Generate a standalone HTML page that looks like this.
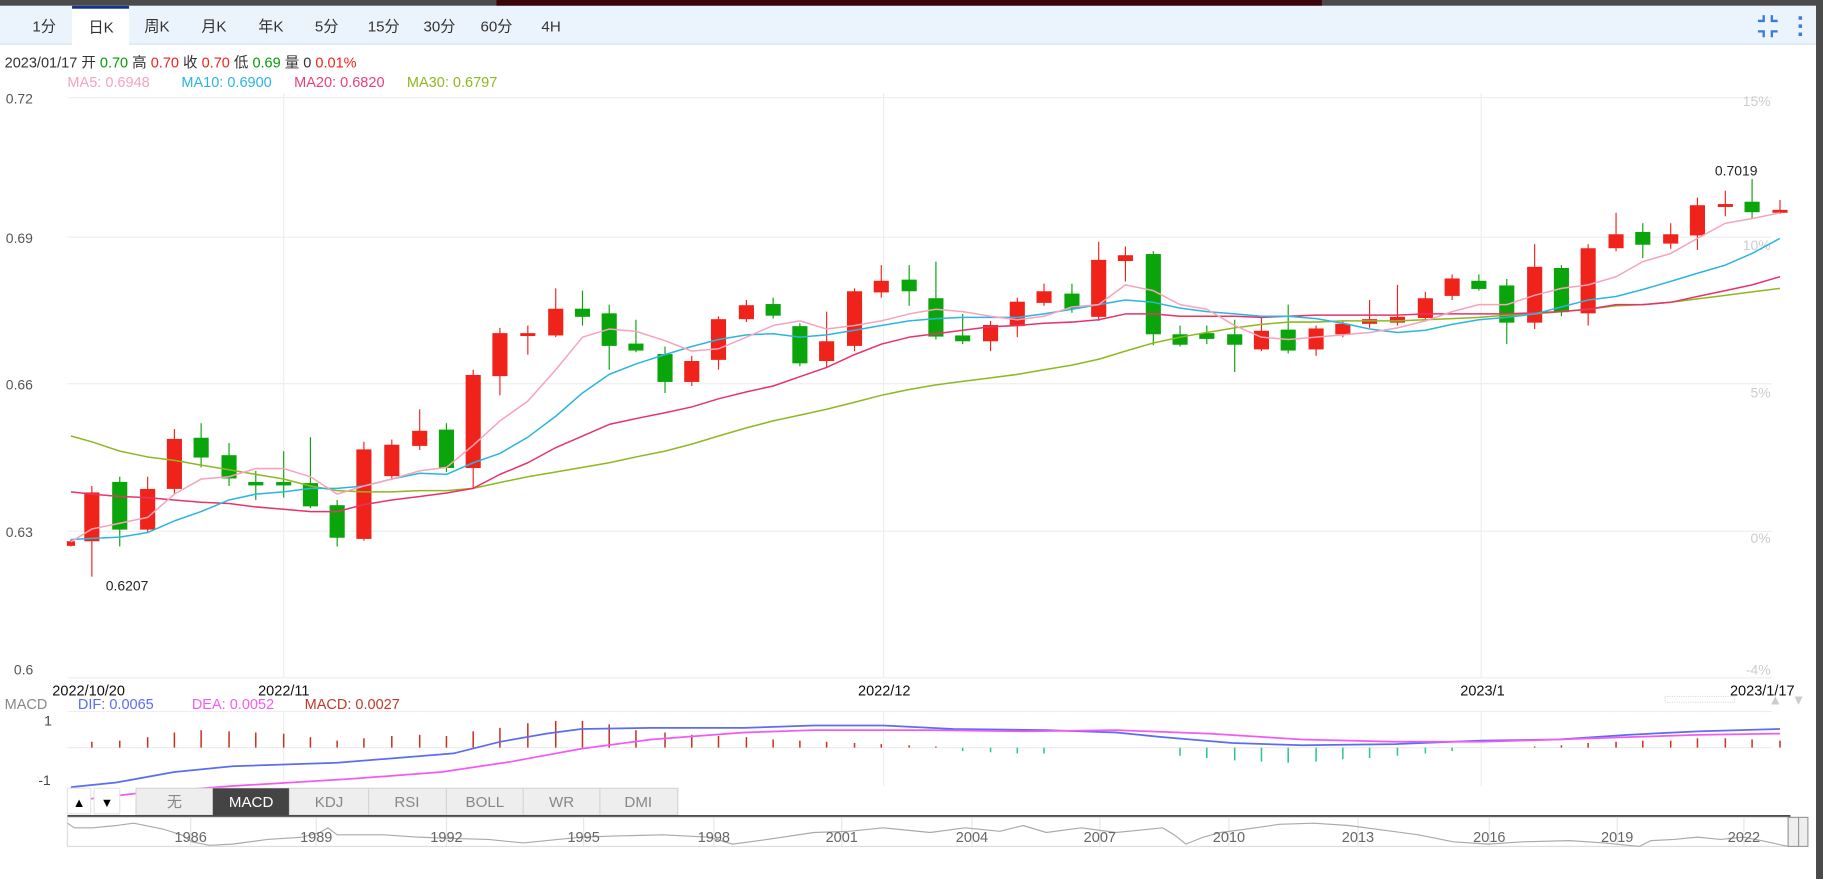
<!DOCTYPE html>
<html><head><meta charset="utf-8"><style>
html,body{margin:0;padding:0;width:1823px;height:879px;overflow:hidden;background:#fff}
svg{display:block}
text{font-family:"Liberation Sans","Noto Sans CJK SC",sans-serif}
</style></head><body>
<svg width="1823" height="879" viewBox="0 0 1568 756" preserveAspectRatio="none" xmlns="http://www.w3.org/2000/svg">
<rect x="0" y="0" width="1568" height="756" fill="#fff"/>
<!-- top bar -->
<rect x="0" y="0" width="1568" height="5" fill="#4a4a4a"/>
<rect x="427" y="0" width="710" height="5" fill="#3a0508"/>
<rect x="0" y="5" width="1562" height="33" fill="#ebf3fd"/>
<rect x="0" y="37.5" width="1562" height="1" fill="#d3e2f5"/>
<rect x="62" y="6" width="49" height="33" fill="#fff"/>
<rect x="62" y="5" width="49" height="2.5" fill="#14338a"/>
<rect x="1562" y="0" width="6" height="756" fill="#4a4a4a"/>
<g font-size="13" fill="#333" text-anchor="middle">
<text x="38" y="27">1分</text><text x="87" y="28">日K</text><text x="135" y="27">周K</text><text x="184" y="27">月K</text><text x="233" y="27">年K</text><text x="281" y="27">5分</text><text x="330" y="27">15分</text><text x="378" y="27">30分</text><text x="427" y="27">60分</text><text x="474" y="27">4H</text>
</g>
<g stroke="#3a7bd5" stroke-width="2" fill="none">
<path d="M1512 18h5v-5M1524 13v5h5M1512 27h5v5M1524 32v-5h5"/>
</g>
<g fill="#3a7bd5"><rect x="1547" y="14" width="3" height="3"/><rect x="1547" y="21" width="3" height="3"/><rect x="1547" y="28" width="3" height="3"/></g>
<!-- info -->
<g font-size="12.5">
<text x="4" y="58" fill="#333">2023/01/17 开 <tspan fill="#0a9a0a">0.70</tspan> 高 <tspan fill="#f0231b">0.70</tspan> 收 <tspan fill="#f0231b">0.70</tspan> 低 <tspan fill="#0a9a0a">0.69</tspan> 量 0 <tspan fill="#f0231b">0.01%</tspan></text>
<text x="58" y="75" fill="#f7a3bd">MA5: 0.6948</text>
<text x="156" y="75" fill="#2bb6e0">MA10: 0.6900</text>
<text x="253" y="75" fill="#e8427a">MA20: 0.6820</text>
<text x="350" y="75" fill="#8fb820">MA30: 0.6797</text>
</g>
<!-- grid -->
<g stroke="#eee" stroke-width="1">
<line x1="58" y1="84" x2="1524" y2="84"/><line x1="58" y1="204" x2="1524" y2="204"/><line x1="58" y1="330" x2="1524" y2="330"/><line x1="58" y1="457" x2="1524" y2="457"/><line x1="58" y1="583" x2="1524" y2="583"/>
<line x1="244" y1="80" x2="244" y2="583"/><line x1="760" y1="80" x2="760" y2="583"/><line x1="1274" y1="80" x2="1274" y2="583"/>
<line x1="58" y1="612" x2="1524" y2="612"/><line x1="58" y1="643" x2="1524" y2="643"/>
<line x1="244" y1="612" x2="244" y2="676"/><line x1="760" y1="612" x2="760" y2="676"/><line x1="1274" y1="612" x2="1274" y2="676"/>
</g>
<g font-size="12" fill="#555">
<text x="5" y="89">0.72</text><text x="5" y="209">0.69</text><text x="5" y="335">0.66</text><text x="5" y="462">0.63</text><text x="12" y="580">0.6</text>
</g>
<g font-size="12" fill="#ccc" text-anchor="end">
<text x="1523" y="91">15%</text><text x="1523" y="215">10%</text><text x="1523" y="342">5%</text><text x="1523" y="467">0%</text><text x="1523" y="580">-4%</text>
</g>
<!-- candles -->
<g stroke-width="1">
<g stroke="#f0231b" fill="#f0231b">
<line x1="61" y1="464" x2="61" y2="470"/><rect x="58" y="466" width="6" height="3"/>
<line x1="79" y1="418" x2="79" y2="496"/><rect x="73" y="424" width="12" height="41"/>
<line x1="127" y1="410" x2="127" y2="458"/><rect x="121" y="421" width="12" height="34"/>
<line x1="150" y1="369" x2="150" y2="425"/><rect x="144" y="378" width="12" height="42"/>
<line x1="313" y1="380" x2="313" y2="465"/><rect x="307" y="387" width="12" height="76"/>
<line x1="337" y1="378" x2="337" y2="413"/><rect x="331" y="383" width="12" height="26"/>
<line x1="361" y1="352" x2="361" y2="387"/><rect x="355" y="371" width="12" height="12"/>
<line x1="407" y1="318" x2="407" y2="420"/><rect x="401" y="323" width="12" height="79"/>
<line x1="430" y1="282" x2="430" y2="340"/><rect x="424" y="287" width="12" height="36"/>
<line x1="454" y1="280" x2="454" y2="305"/><rect x="448" y="287" width="12" height="1.5"/>
<line x1="478" y1="248" x2="478" y2="290"/><rect x="472" y="266" width="12" height="22"/>
<line x1="595" y1="306" x2="595" y2="332"/><rect x="589" y="311" width="12" height="17"/>
<line x1="618" y1="272" x2="618" y2="318"/><rect x="612" y="275" width="12" height="34"/>
<line x1="642" y1="258" x2="642" y2="277"/><rect x="636" y="263" width="12" height="11"/>
<line x1="711" y1="268" x2="711" y2="316"/><rect x="705" y="294" width="12" height="16"/>
<line x1="735" y1="248" x2="735" y2="302"/><rect x="729" y="251" width="12" height="46"/>
<line x1="758" y1="228" x2="758" y2="256"/><rect x="752" y="242" width="12" height="9"/>
<line x1="852" y1="276" x2="852" y2="302"/><rect x="846" y="280" width="12" height="13"/>
<line x1="875" y1="256" x2="875" y2="290"/><rect x="869" y="260" width="12" height="20"/>
<line x1="898" y1="244" x2="898" y2="263"/><rect x="892" y="251" width="12" height="9"/>
<line x1="945" y1="208" x2="945" y2="276"/><rect x="939" y="224" width="12" height="48"/>
<line x1="968" y1="212" x2="968" y2="242"/><rect x="962" y="220" width="12" height="4"/>
<line x1="1085" y1="273" x2="1085" y2="302"/><rect x="1079" y="285" width="12" height="15"/>
<line x1="1132" y1="280" x2="1132" y2="306"/><rect x="1126" y="283" width="12" height="17"/>
<line x1="1155" y1="276" x2="1155" y2="290"/><rect x="1149" y="279" width="12" height="8"/>
<line x1="1178" y1="258" x2="1178" y2="282"/><rect x="1172" y="275" width="12" height="3"/>
<line x1="1202" y1="245" x2="1202" y2="280"/><rect x="1196" y="273" width="12" height="4"/>
<line x1="1226" y1="251" x2="1226" y2="275"/><rect x="1220" y="257" width="12" height="16"/>
<line x1="1249" y1="236" x2="1249" y2="258"/><rect x="1243" y="240" width="12" height="14"/>
<line x1="1320" y1="210" x2="1320" y2="283"/><rect x="1314" y="230" width="12" height="47"/>
<line x1="1366" y1="210" x2="1366" y2="280"/><rect x="1360" y="214" width="12" height="55"/>
<line x1="1390" y1="183" x2="1390" y2="216"/><rect x="1384" y="202" width="12" height="11"/>
<line x1="1437" y1="192" x2="1437" y2="214"/><rect x="1431" y="202" width="12" height="7"/>
<line x1="1460" y1="170" x2="1460" y2="215"/><rect x="1454" y="177" width="12" height="25"/>
<line x1="1484" y1="164" x2="1484" y2="186"/><rect x="1478" y="176" width="12" height="1.5"/>
<line x1="1531" y1="172" x2="1531" y2="184"/><rect x="1525" y="181" width="12" height="1.5"/>
</g>
<g stroke="#0aa50a" fill="#0aa50a">
<line x1="103" y1="410" x2="103" y2="470"/><rect x="97" y="415" width="12" height="40"/>
<line x1="173" y1="364" x2="173" y2="402"/><rect x="167" y="377" width="12" height="16"/>
<line x1="197" y1="381" x2="197" y2="418"/><rect x="191" y="392" width="12" height="19"/>
<line x1="220" y1="405" x2="220" y2="430"/><rect x="214" y="415" width="12" height="2"/>
<line x1="244" y1="388" x2="244" y2="428"/><rect x="238" y="415" width="12" height="2"/>
<line x1="267" y1="376" x2="267" y2="437"/><rect x="261" y="416" width="12" height="19"/>
<line x1="290" y1="430" x2="290" y2="470"/><rect x="284" y="435" width="12" height="27"/>
<line x1="384" y1="364" x2="384" y2="406"/><rect x="378" y="370" width="12" height="32"/>
<line x1="501" y1="250" x2="501" y2="280"/><rect x="495" y="266" width="12" height="6"/>
<line x1="524" y1="262" x2="524" y2="318"/><rect x="518" y="270" width="12" height="27"/>
<line x1="547" y1="275" x2="547" y2="303"/><rect x="541" y="296" width="12" height="5"/>
<line x1="572" y1="298" x2="572" y2="338"/><rect x="566" y="305" width="12" height="23"/>
<line x1="665" y1="256" x2="665" y2="274"/><rect x="659" y="262" width="12" height="9"/>
<line x1="688" y1="278" x2="688" y2="315"/><rect x="682" y="281" width="12" height="31"/>
<line x1="782" y1="228" x2="782" y2="263"/><rect x="776" y="241" width="12" height="9"/>
<line x1="805" y1="225" x2="805" y2="292"/><rect x="799" y="257" width="12" height="32"/>
<line x1="828" y1="270" x2="828" y2="296"/><rect x="822" y="289" width="12" height="4"/>
<line x1="922" y1="244" x2="922" y2="269"/><rect x="916" y="253" width="12" height="12"/>
<line x1="992" y1="216" x2="992" y2="297"/><rect x="986" y="219" width="12" height="68"/>
<line x1="1015" y1="280" x2="1015" y2="298"/><rect x="1009" y="288" width="12" height="8"/>
<line x1="1038" y1="280" x2="1038" y2="296"/><rect x="1032" y="287" width="12" height="4"/>
<line x1="1062" y1="275" x2="1062" y2="320"/><rect x="1056" y="288" width="12" height="8"/>
<line x1="1108" y1="262" x2="1108" y2="304"/><rect x="1102" y="284" width="12" height="17"/>
<line x1="1272" y1="236" x2="1272" y2="250"/><rect x="1266" y="242" width="12" height="6"/>
<line x1="1296" y1="240" x2="1296" y2="296"/><rect x="1290" y="246" width="12" height="31"/>
<line x1="1343" y1="228" x2="1343" y2="272"/><rect x="1337" y="231" width="12" height="37"/>
<line x1="1413" y1="192" x2="1413" y2="222"/><rect x="1407" y="200" width="12" height="10"/>
<line x1="1507" y1="154" x2="1507" y2="188"/><rect x="1501" y="174" width="12" height="8"/>
</g>
</g>
<!-- MAs -->
<g fill="none" stroke-width="1.3" stroke-linejoin="round">
<polyline stroke="#8fb820" points="61,375 79,380 103,388 127,393 150,396 173,400 197,404 220,408 244,412 267,418 290,422 313,423 337,423 361,422 384,422 407,420 430,415 454,410 478,406 501,402 524,398 547,393 572,388 595,382 618,375 642,368 665,362 688,357 711,352 735,346 758,340 782,335 805,331 828,328 852,325 875,322 898,318 922,314 945,309 968,302 992,295 1015,290 1038,286 1062,282 1085,279 1108,277 1132,277 1155,276 1178,276 1202,276 1226,275 1249,274 1272,273 1296,271 1320,270 1343,268 1366,266 1390,263 1413,262 1437,260 1460,257 1484,254 1507,251 1531,248"/>
<polyline stroke="#e8336a" points="61,423 79,425 103,427 127,428 150,430 173,432 197,433 220,436 244,438 267,440 290,440 313,434 337,430 361,427 384,424 407,420 430,408 454,398 478,385 501,375 524,365 547,360 572,355 595,350 618,343 642,337 665,332 688,324 711,316 735,305 758,296 782,290 805,287 828,284 852,281 875,280 898,278 922,277 945,275 968,270 992,270 1015,272 1038,272 1062,272 1085,273 1108,272 1132,271 1155,271 1178,271 1202,271 1226,270 1249,270 1272,270 1296,270 1320,269 1343,268 1366,266 1390,262 1413,262 1437,260 1460,255 1484,250 1507,245 1531,238"/>
<polyline stroke="#2bb6e0" points="61,464 79,463 103,462 127,458 150,448 173,440 197,430 220,425 244,423 267,420 290,420 313,418 337,412 361,407 384,408 407,398 430,390 454,376 478,358 501,338 524,322 547,313 572,305 595,298 618,292 642,288 665,287 688,290 711,288 735,284 758,280 782,276 805,274 828,273 852,273 875,273 898,270 922,266 945,262 968,258 992,260 1015,265 1038,268 1062,270 1085,272 1108,272 1132,274 1155,278 1178,283 1202,286 1226,284 1249,279 1272,275 1296,273 1320,270 1343,264 1366,258 1390,255 1413,249 1437,242 1460,235 1484,228 1507,218 1531,205"/>
<polyline stroke="#f7a3bd" points="61,466 79,455 103,450 127,445 150,425 173,412 197,410 220,403 244,403 267,410 290,425 313,418 337,412 361,405 384,402 407,383 430,362 454,345 478,318 501,290 524,283 547,285 572,293 595,302 618,300 642,290 665,280 688,276 711,283 735,280 758,276 782,270 805,266 828,268 852,272 875,275 898,272 922,264 945,262 968,245 992,250 1015,262 1038,266 1062,280 1085,290 1108,292 1132,290 1155,288 1178,286 1202,282 1226,276 1249,268 1272,262 1296,262 1320,254 1343,248 1366,245 1390,238 1413,225 1437,218 1460,205 1484,192 1507,188 1531,183"/>
</g>
<g font-size="12" fill="#222">
<text x="1475" y="151">0.7019</text><text x="91" y="508">0.6207</text>
</g>
<!-- date axis -->
<g font-size="12.5" fill="#111">
<text x="45" y="598">2022/10/20</text><text x="222" y="598">2022/11</text><text x="738" y="598">2022/12</text><text x="1256" y="598">2023/1</text><text x="1488" y="598">2023/1/17</text>
</g>
<g font-size="12.5">
<text x="4" y="610" fill="#888">MACD</text>
<text x="67" y="610" fill="#5b6cf5">DIF: 0.0065</text>
<text x="165" y="610" fill="#f35af5">DEA: 0.0052</text>
<text x="262" y="610" fill="#c0392b">MACD: 0.0027</text>
</g>
<rect x="1432" y="599" width="60" height="5" fill="none" stroke="#ddd" stroke-dasharray="1,1"/>
<text x="1527" y="606" font-size="12" fill="#ccc" text-anchor="middle">▲</text>
<text x="1547" y="606" font-size="12" fill="#ccc" text-anchor="middle">▼</text>
<g font-size="12" fill="#444"><text x="38" y="624">1</text><text x="33" y="675">-1</text></g>
<!-- macd hist -->
<g stroke="#c8321e" stroke-width="1.3">
<line x1="79" y1="643" x2="79" y2="638"/><line x1="103" y1="643" x2="103" y2="637"/><line x1="127" y1="643" x2="127" y2="634"/><line x1="150" y1="643" x2="150" y2="630"/><line x1="173" y1="643" x2="173" y2="628"/><line x1="197" y1="643" x2="197" y2="629"/><line x1="220" y1="643" x2="220" y2="630"/><line x1="244" y1="643" x2="244" y2="631"/><line x1="267" y1="643" x2="267" y2="634"/><line x1="290" y1="643" x2="290" y2="637"/><line x1="313" y1="643" x2="313" y2="635"/><line x1="337" y1="643" x2="337" y2="633"/><line x1="361" y1="643" x2="361" y2="632"/><line x1="384" y1="643" x2="384" y2="633"/><line x1="407" y1="643" x2="407" y2="629"/><line x1="430" y1="643" x2="430" y2="626"/><line x1="454" y1="643" x2="454" y2="622"/><line x1="478" y1="643" x2="478" y2="620"/><line x1="501" y1="643" x2="501" y2="620"/><line x1="524" y1="643" x2="524" y2="623"/><line x1="547" y1="643" x2="547" y2="628"/><line x1="572" y1="643" x2="572" y2="630"/><line x1="595" y1="643" x2="595" y2="632"/><line x1="618" y1="643" x2="618" y2="633"/><line x1="642" y1="643" x2="642" y2="634"/><line x1="665" y1="643" x2="665" y2="636"/><line x1="688" y1="643" x2="688" y2="637"/><line x1="711" y1="643" x2="711" y2="638"/><line x1="735" y1="643" x2="735" y2="639"/><line x1="758" y1="643" x2="758" y2="640"/><line x1="782" y1="643" x2="782" y2="641"/><line x1="805" y1="643" x2="805" y2="642"/>
<line x1="1320" y1="643" x2="1320" y2="642"/><line x1="1343" y1="643" x2="1343" y2="641"/><line x1="1366" y1="643" x2="1366" y2="639"/><line x1="1390" y1="643" x2="1390" y2="638"/><line x1="1413" y1="643" x2="1413" y2="637"/><line x1="1437" y1="643" x2="1437" y2="637"/><line x1="1460" y1="643" x2="1460" y2="635"/><line x1="1484" y1="643" x2="1484" y2="635"/><line x1="1507" y1="643" x2="1507" y2="636"/><line x1="1531" y1="643" x2="1531" y2="637"/>
</g>
<g stroke="#2ec48a" stroke-width="1.3">
<line x1="828" y1="643" x2="828" y2="646"/><line x1="852" y1="643" x2="852" y2="647"/><line x1="875" y1="643" x2="875" y2="648"/><line x1="898" y1="643" x2="898" y2="648"/><line x1="1015" y1="643" x2="1015" y2="650"/><line x1="1038" y1="643" x2="1038" y2="652"/><line x1="1062" y1="643" x2="1062" y2="654"/><line x1="1085" y1="643" x2="1085" y2="655"/><line x1="1108" y1="643" x2="1108" y2="656"/><line x1="1132" y1="643" x2="1132" y2="655"/><line x1="1155" y1="643" x2="1155" y2="653"/><line x1="1178" y1="643" x2="1178" y2="652"/><line x1="1202" y1="643" x2="1202" y2="650"/><line x1="1226" y1="643" x2="1226" y2="648"/><line x1="1249" y1="643" x2="1249" y2="646"/>
</g>
<g fill="none" stroke-width="1.5">
<polyline stroke="#5b6cf5" points="61,677 100,673 150,664 200,659 290,656 340,652 390,648 430,638 470,631 500,627 560,626 640,626 700,624 760,624 820,627 900,628 960,630 1000,634 1060,639 1120,641 1200,640 1274,637 1340,636 1400,632 1460,629 1531,627"/>
<polyline stroke="#f35af5" points="61,689 120,682 200,676 300,670 380,664 440,655 500,644 560,636 640,630 700,628 800,628 880,629 960,628 1040,631 1120,636 1200,638 1274,638 1340,636 1400,634 1460,632 1531,631"/>
</g>
<!-- bottom tabs -->
<g font-size="13" text-anchor="middle">
<rect x="58" y="678" width="20" height="22" fill="#fff" stroke="#e5e5e5"/>
<rect x="81" y="678" width="22" height="22" fill="#fff" stroke="#e5e5e5"/>
<text x="68" y="694" font-size="11" fill="#000">▲</text><text x="92" y="694" font-size="11" fill="#000">▼</text>
<rect x="117" y="678" width="466" height="23" fill="#eee" stroke="#d5d5d5"/>
<rect x="183" y="678" width="66" height="23" fill="#444"/>
<g stroke="#d5d5d5"><line x1="249" y1="678" x2="249" y2="701"/><line x1="317" y1="678" x2="317" y2="701"/><line x1="384" y1="678" x2="384" y2="701"/><line x1="450" y1="678" x2="450" y2="701"/><line x1="516" y1="678" x2="516" y2="701"/></g>
<text x="150" y="694" fill="#888">无</text><text x="216" y="694" fill="#fff">MACD</text><text x="283" y="694" fill="#888">KDJ</text><text x="350" y="694" fill="#888">RSI</text><text x="417" y="694" fill="#888">BOLL</text><text x="483" y="694" fill="#888">WR</text><text x="549" y="694" fill="#888">DMI</text>
</g>
<!-- navigator -->
<rect x="58" y="701" width="1482" height="2" fill="#444"/>
<rect x="58" y="703" width="1480" height="25" fill="none" stroke="#ddd"/>
<g stroke="#e5e5e5"><line x1="164" y1="703" x2="164" y2="728"/><line x1="272" y1="703" x2="272" y2="728"/><line x1="384" y1="703" x2="384" y2="728"/><line x1="502" y1="703" x2="502" y2="728"/><line x1="614" y1="703" x2="614" y2="728"/><line x1="724" y1="703" x2="724" y2="728"/><line x1="836" y1="703" x2="836" y2="728"/><line x1="946" y1="703" x2="946" y2="728"/><line x1="1057" y1="703" x2="1057" y2="728"/><line x1="1168" y1="703" x2="1168" y2="728"/><line x1="1281" y1="703" x2="1281" y2="728"/><line x1="1391" y1="703" x2="1391" y2="728"/><line x1="1500" y1="703" x2="1500" y2="728"/></g>
<polyline fill="none" stroke="#aaa" stroke-width="1" points="58,708 64,712 80,712 100,710 115,708 140,713 156,718 165,724 180,727 200,726 230,722 260,720 275,716 282,712 290,718 330,718 360,720 385,721 420,722 450,725 480,722 500,720 530,719 570,718 610,720 630,726 660,722 700,716 730,715 760,712 800,716 830,712 860,715 880,710 900,716 930,712 960,716 980,714 1000,712 1010,718 1020,726 1035,720 1050,716 1080,712 1100,709 1130,708 1160,710 1190,714 1220,718 1250,724 1280,726 1310,724 1350,723 1380,725 1410,728 1420,723 1440,722 1460,720 1480,722 1500,720 1520,724 1538,728"/>
<g font-size="12.5" fill="#666" text-anchor="middle">
<text x="164" y="724">1986</text><text x="272" y="724">1989</text><text x="384" y="724">1992</text><text x="502" y="724">1995</text><text x="614" y="724">1998</text><text x="724" y="724">2001</text><text x="836" y="724">2004</text><text x="946" y="724">2007</text><text x="1057" y="724">2010</text><text x="1168" y="724">2013</text><text x="1281" y="724">2016</text><text x="1391" y="724">2019</text><text x="1500" y="724">2022</text>
</g>
<rect x="1538" y="703" width="9" height="25" fill="#eee" stroke="#999"/>
<rect x="1547" y="703" width="8" height="25" fill="#eee" stroke="#999"/>
</svg>
</body></html>
